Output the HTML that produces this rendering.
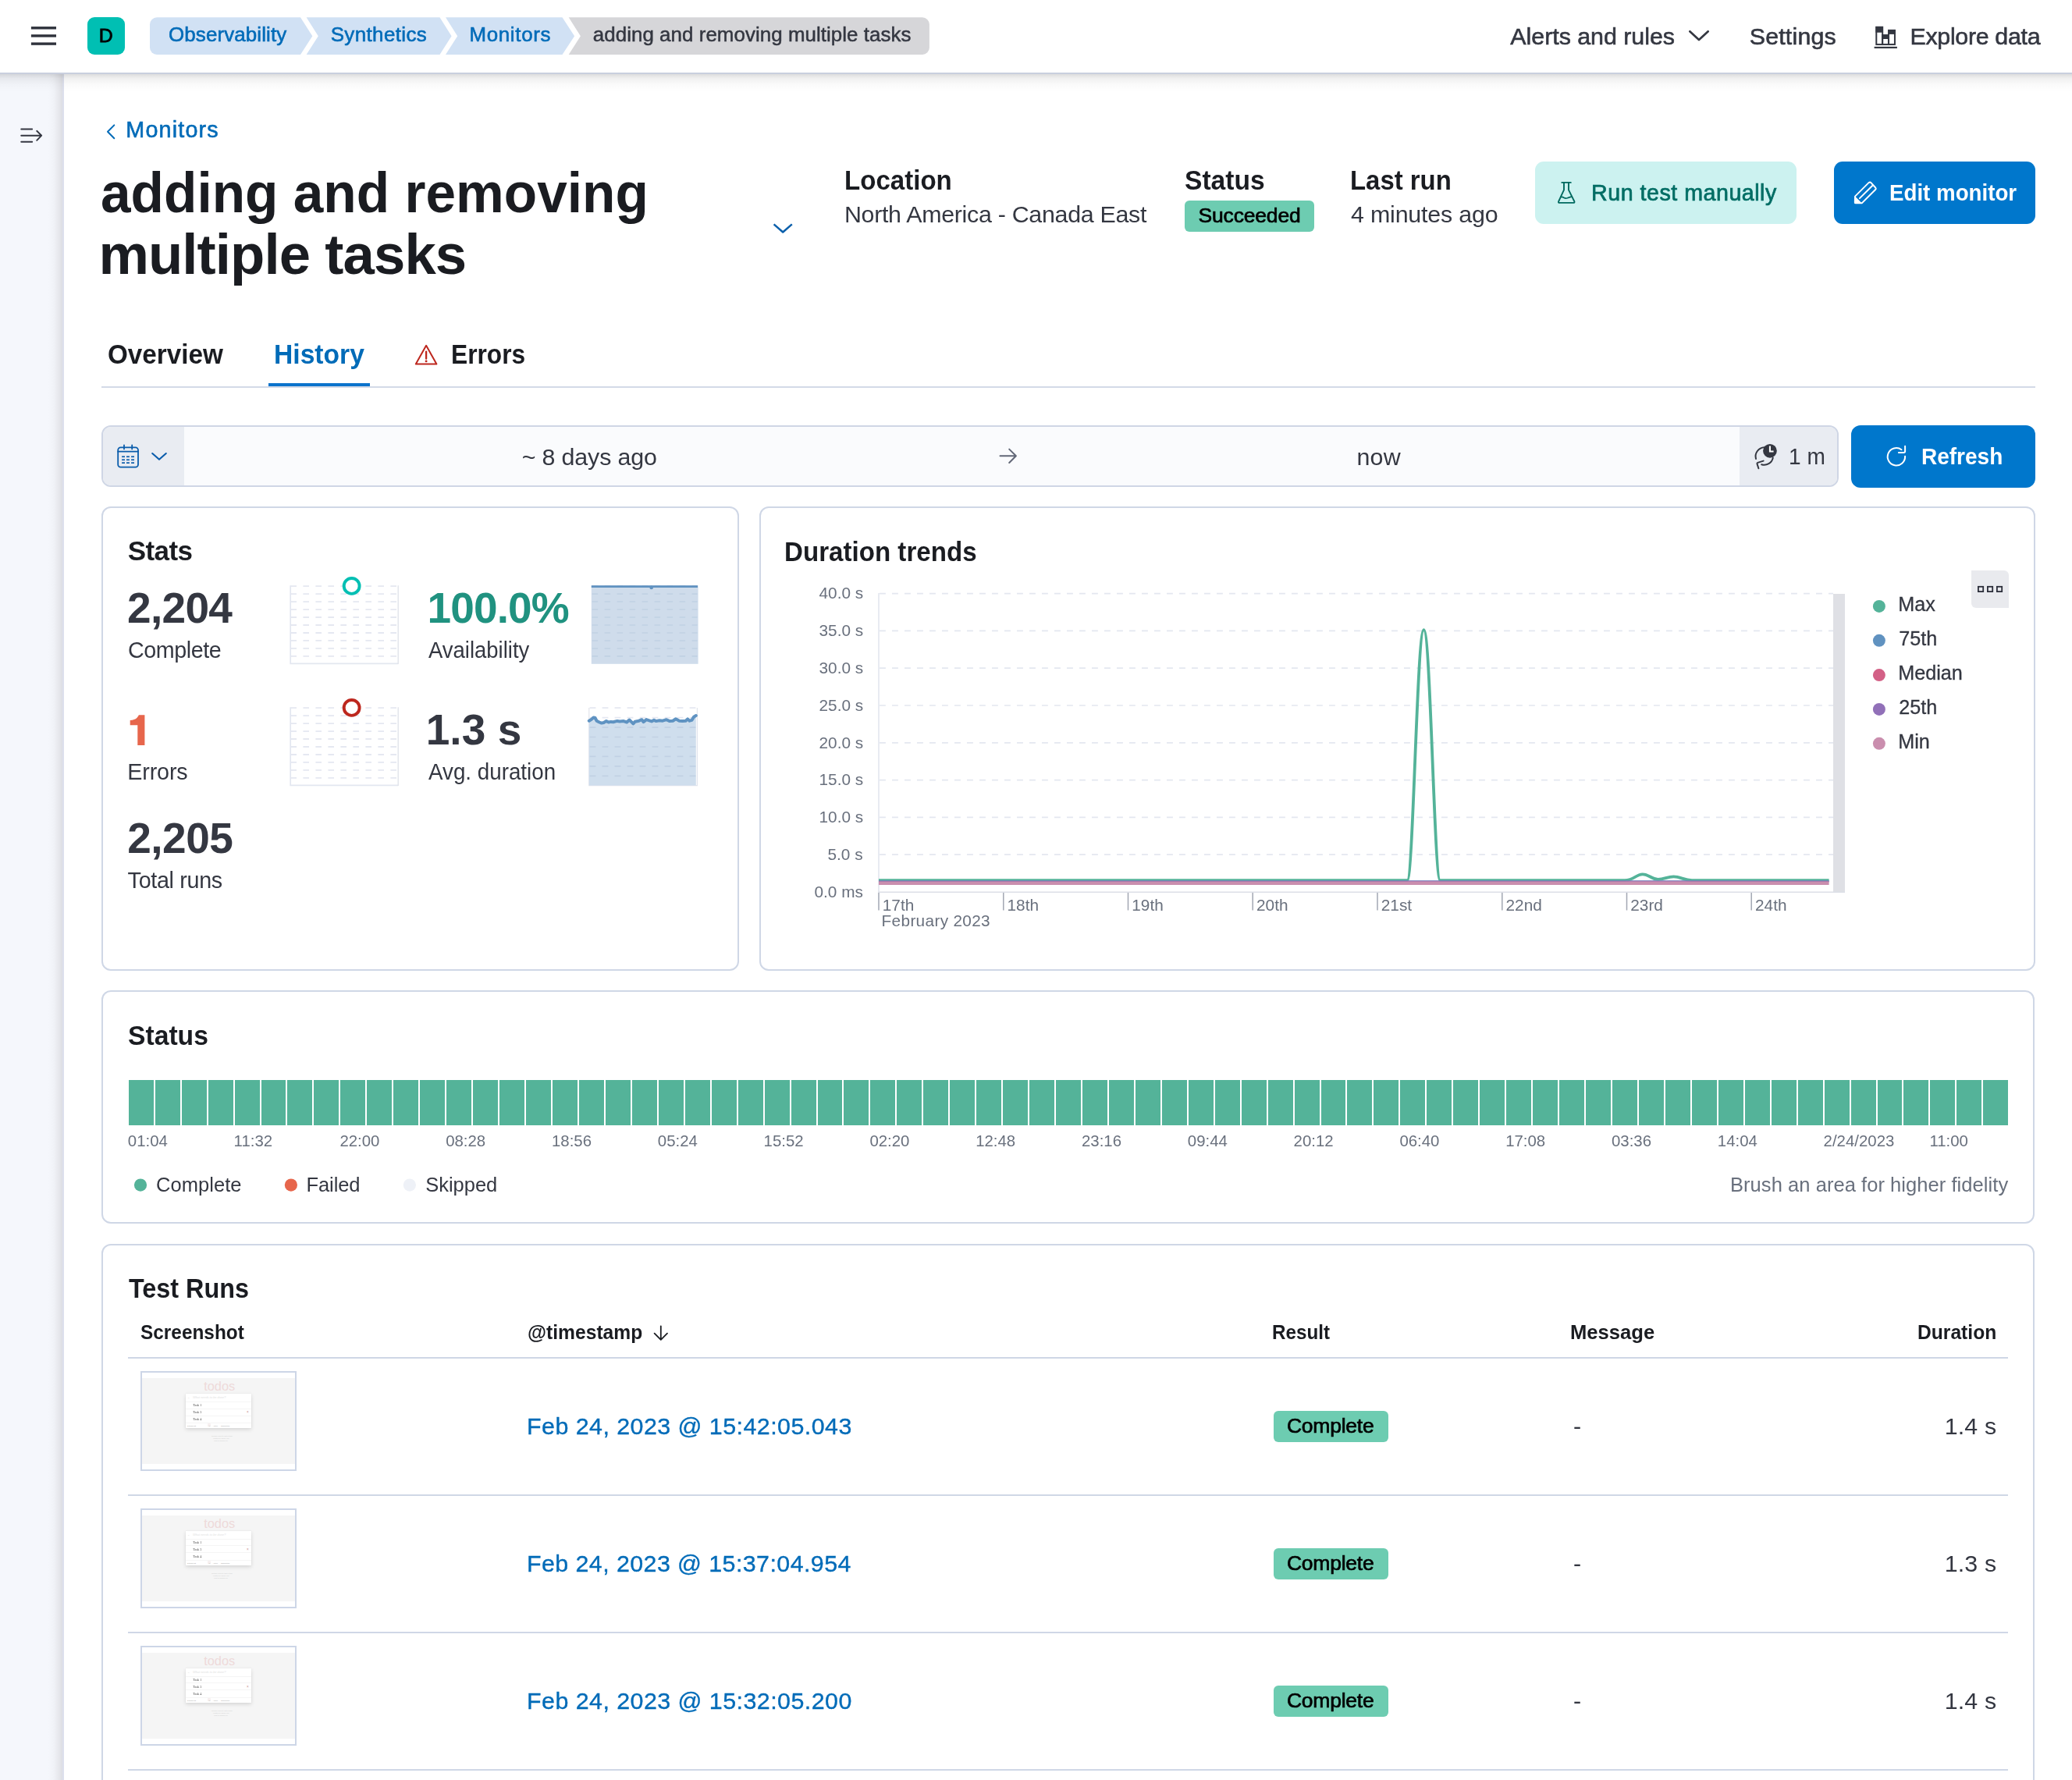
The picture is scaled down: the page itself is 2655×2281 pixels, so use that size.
<!DOCTYPE html>
<html><head><meta charset="utf-8"><title>Synthetics - Monitor history</title>
<style>
html,body{margin:0;padding:0;width:2655px;height:2281px;overflow:hidden;}
body{width:2655px;height:2281px;overflow:hidden;background:#fff;position:relative;font-family:"Liberation Sans",sans-serif;}
.b{position:absolute;box-sizing:border-box;}
.t{position:absolute;white-space:pre;line-height:1;font-family:"Liberation Sans",sans-serif;font-weight:400;}
.ov{position:absolute;left:0;top:0;pointer-events:none;}
.card{position:absolute;box-sizing:border-box;border:2px solid #cfd7e6;border-radius:12px;background:#fff;}
.tl{position:absolute;left:0;top:0;width:2655px;height:2281px;will-change:transform;}
#root{position:relative;width:2655px;height:2281px;overflow:hidden;background:#fff;}

</style></head>
<body>
<div id="root">
<div class="b" style="left:0.00px;top:94.00px;width:80.00px;height:2187.00px;background:linear-gradient(to right,#f5f7fc 0,#f5f7fc 62px,#f0f2f7 69px,#e7e8ed 75px,#dddee3 80px);"></div>
<div class="b" style="left:80.00px;top:94.00px;width:2.00px;height:2187.00px;background:#dde0ed;"></div>
<div class="b" style="left:0.00px;top:95.00px;width:2655.00px;height:22.00px;background:linear-gradient(to bottom,rgba(0,0,0,.135),rgba(0,0,0,.06) 25%,rgba(0,0,0,.02) 60%,rgba(0,0,0,0));"></div>
<div class="b" style="left:0.00px;top:0.00px;width:2655.00px;height:93.00px;background:#fff;"></div>
<div class="b" style="left:0.00px;top:93.00px;width:2655.00px;height:2.00px;background:#c9cfde;"></div>
<div class="b" style="left:112.20px;top:22.30px;width:47.60px;height:47.60px;background:#00bfb3;border-radius:9px;"></div>
<div class="b" style="left:1517.80px;top:256.90px;width:166.40px;height:40.00px;background:#6dccb1;border-radius:6px;"></div>
<div class="b" style="left:1966.90px;top:207.00px;width:335.10px;height:80.00px;background:#ccf2f0;border-radius:11px;"></div>
<div class="b" style="left:2350.00px;top:207.00px;width:258.00px;height:80.00px;background:#0077cc;border-radius:11px;"></div>
<div class="b" style="left:130.00px;top:495.20px;width:2478.00px;height:1.80px;background:#d3dae7;"></div>
<div class="b" style="left:344.10px;top:491.10px;width:130.00px;height:4.20px;background:#0b73cc;"></div>
<div class="b" style="left:130.40px;top:545.40px;width:2225.30px;height:79.00px;background:#fafbfd;border:2px solid #cfd6e5;border-radius:12px;overflow:hidden;"></div>
<div class="b" style="left:132.40px;top:547.40px;width:103.50px;height:75.00px;background:#e9ecf2;border-radius:10px 0 0 10px;"></div>
<div class="b" style="left:2229.10px;top:547.40px;width:124.60px;height:75.00px;background:#e9ecf2;border-radius:0 10px 10px 0;"></div>
<div class="b" style="left:2372.00px;top:545.20px;width:236.00px;height:79.40px;background:#0077cc;border-radius:12px;"></div>
<div class="card" style="left:130.30px;top:649.00px;width:816.70px;height:595.00px;"></div>
<div class="card" style="left:973.00px;top:649.00px;width:1634.50px;height:595.00px;"></div>
<div class="card" style="left:130.30px;top:1269.40px;width:2477.20px;height:298.70px;"></div>
<div class="card" style="left:130.30px;top:1593.80px;width:2477.20px;height:726.20px;"></div>
<div class="b" style="left:2526.00px;top:731.00px;width:48.00px;height:48.00px;background:#e9eaee;border-radius:0 6px 0 6px;"></div>
<div class="b" style="left:2349.20px;top:760.80px;width:14.80px;height:382.20px;background:#dfe0e5;"></div>
<div class="b" style="left:165.00px;top:1384.00px;width:32.00px;height:58.00px;background:#54b399;"></div>
<div class="b" style="left:199.00px;top:1384.00px;width:32.00px;height:58.00px;background:#54b399;"></div>
<div class="b" style="left:233.00px;top:1384.00px;width:32.00px;height:58.00px;background:#54b399;"></div>
<div class="b" style="left:267.00px;top:1384.00px;width:32.00px;height:58.00px;background:#54b399;"></div>
<div class="b" style="left:301.00px;top:1384.00px;width:32.00px;height:58.00px;background:#54b399;"></div>
<div class="b" style="left:335.00px;top:1384.00px;width:31.00px;height:58.00px;background:#54b399;"></div>
<div class="b" style="left:368.00px;top:1384.00px;width:32.00px;height:58.00px;background:#54b399;"></div>
<div class="b" style="left:402.00px;top:1384.00px;width:32.00px;height:58.00px;background:#54b399;"></div>
<div class="b" style="left:436.00px;top:1384.00px;width:32.00px;height:58.00px;background:#54b399;"></div>
<div class="b" style="left:470.00px;top:1384.00px;width:32.00px;height:58.00px;background:#54b399;"></div>
<div class="b" style="left:504.00px;top:1384.00px;width:32.00px;height:58.00px;background:#54b399;"></div>
<div class="b" style="left:538.00px;top:1384.00px;width:32.00px;height:58.00px;background:#54b399;"></div>
<div class="b" style="left:572.00px;top:1384.00px;width:32.00px;height:58.00px;background:#54b399;"></div>
<div class="b" style="left:606.00px;top:1384.00px;width:32.00px;height:58.00px;background:#54b399;"></div>
<div class="b" style="left:640.00px;top:1384.00px;width:32.00px;height:58.00px;background:#54b399;"></div>
<div class="b" style="left:674.00px;top:1384.00px;width:32.00px;height:58.00px;background:#54b399;"></div>
<div class="b" style="left:708.00px;top:1384.00px;width:32.00px;height:58.00px;background:#54b399;"></div>
<div class="b" style="left:742.00px;top:1384.00px;width:32.00px;height:58.00px;background:#54b399;"></div>
<div class="b" style="left:776.00px;top:1384.00px;width:32.00px;height:58.00px;background:#54b399;"></div>
<div class="b" style="left:810.00px;top:1384.00px;width:32.00px;height:58.00px;background:#54b399;"></div>
<div class="b" style="left:844.00px;top:1384.00px;width:32.00px;height:58.00px;background:#54b399;"></div>
<div class="b" style="left:878.00px;top:1384.00px;width:32.00px;height:58.00px;background:#54b399;"></div>
<div class="b" style="left:912.00px;top:1384.00px;width:32.00px;height:58.00px;background:#54b399;"></div>
<div class="b" style="left:946.00px;top:1384.00px;width:32.00px;height:58.00px;background:#54b399;"></div>
<div class="b" style="left:980.00px;top:1384.00px;width:32.00px;height:58.00px;background:#54b399;"></div>
<div class="b" style="left:1014.00px;top:1384.00px;width:32.00px;height:58.00px;background:#54b399;"></div>
<div class="b" style="left:1048.00px;top:1384.00px;width:31.00px;height:58.00px;background:#54b399;"></div>
<div class="b" style="left:1081.00px;top:1384.00px;width:32.00px;height:58.00px;background:#54b399;"></div>
<div class="b" style="left:1115.00px;top:1384.00px;width:32.00px;height:58.00px;background:#54b399;"></div>
<div class="b" style="left:1149.00px;top:1384.00px;width:32.00px;height:58.00px;background:#54b399;"></div>
<div class="b" style="left:1183.00px;top:1384.00px;width:32.00px;height:58.00px;background:#54b399;"></div>
<div class="b" style="left:1217.00px;top:1384.00px;width:32.00px;height:58.00px;background:#54b399;"></div>
<div class="b" style="left:1251.00px;top:1384.00px;width:32.00px;height:58.00px;background:#54b399;"></div>
<div class="b" style="left:1285.00px;top:1384.00px;width:32.00px;height:58.00px;background:#54b399;"></div>
<div class="b" style="left:1319.00px;top:1384.00px;width:32.00px;height:58.00px;background:#54b399;"></div>
<div class="b" style="left:1353.00px;top:1384.00px;width:32.00px;height:58.00px;background:#54b399;"></div>
<div class="b" style="left:1387.00px;top:1384.00px;width:32.00px;height:58.00px;background:#54b399;"></div>
<div class="b" style="left:1421.00px;top:1384.00px;width:32.00px;height:58.00px;background:#54b399;"></div>
<div class="b" style="left:1455.00px;top:1384.00px;width:32.00px;height:58.00px;background:#54b399;"></div>
<div class="b" style="left:1489.00px;top:1384.00px;width:32.00px;height:58.00px;background:#54b399;"></div>
<div class="b" style="left:1523.00px;top:1384.00px;width:32.00px;height:58.00px;background:#54b399;"></div>
<div class="b" style="left:1557.00px;top:1384.00px;width:32.00px;height:58.00px;background:#54b399;"></div>
<div class="b" style="left:1591.00px;top:1384.00px;width:32.00px;height:58.00px;background:#54b399;"></div>
<div class="b" style="left:1625.00px;top:1384.00px;width:32.00px;height:58.00px;background:#54b399;"></div>
<div class="b" style="left:1659.00px;top:1384.00px;width:32.00px;height:58.00px;background:#54b399;"></div>
<div class="b" style="left:1693.00px;top:1384.00px;width:31.00px;height:58.00px;background:#54b399;"></div>
<div class="b" style="left:1726.00px;top:1384.00px;width:32.00px;height:58.00px;background:#54b399;"></div>
<div class="b" style="left:1760.00px;top:1384.00px;width:32.00px;height:58.00px;background:#54b399;"></div>
<div class="b" style="left:1794.00px;top:1384.00px;width:32.00px;height:58.00px;background:#54b399;"></div>
<div class="b" style="left:1828.00px;top:1384.00px;width:32.00px;height:58.00px;background:#54b399;"></div>
<div class="b" style="left:1862.00px;top:1384.00px;width:32.00px;height:58.00px;background:#54b399;"></div>
<div class="b" style="left:1896.00px;top:1384.00px;width:32.00px;height:58.00px;background:#54b399;"></div>
<div class="b" style="left:1930.00px;top:1384.00px;width:32.00px;height:58.00px;background:#54b399;"></div>
<div class="b" style="left:1964.00px;top:1384.00px;width:32.00px;height:58.00px;background:#54b399;"></div>
<div class="b" style="left:1998.00px;top:1384.00px;width:32.00px;height:58.00px;background:#54b399;"></div>
<div class="b" style="left:2032.00px;top:1384.00px;width:32.00px;height:58.00px;background:#54b399;"></div>
<div class="b" style="left:2066.00px;top:1384.00px;width:32.00px;height:58.00px;background:#54b399;"></div>
<div class="b" style="left:2100.00px;top:1384.00px;width:32.00px;height:58.00px;background:#54b399;"></div>
<div class="b" style="left:2134.00px;top:1384.00px;width:32.00px;height:58.00px;background:#54b399;"></div>
<div class="b" style="left:2168.00px;top:1384.00px;width:32.00px;height:58.00px;background:#54b399;"></div>
<div class="b" style="left:2202.00px;top:1384.00px;width:32.00px;height:58.00px;background:#54b399;"></div>
<div class="b" style="left:2236.00px;top:1384.00px;width:32.00px;height:58.00px;background:#54b399;"></div>
<div class="b" style="left:2270.00px;top:1384.00px;width:32.00px;height:58.00px;background:#54b399;"></div>
<div class="b" style="left:2304.00px;top:1384.00px;width:32.00px;height:58.00px;background:#54b399;"></div>
<div class="b" style="left:2338.00px;top:1384.00px;width:32.00px;height:58.00px;background:#54b399;"></div>
<div class="b" style="left:2372.00px;top:1384.00px;width:32.00px;height:58.00px;background:#54b399;"></div>
<div class="b" style="left:2406.00px;top:1384.00px;width:31.00px;height:58.00px;background:#54b399;"></div>
<div class="b" style="left:2439.00px;top:1384.00px;width:32.00px;height:58.00px;background:#54b399;"></div>
<div class="b" style="left:2473.00px;top:1384.00px;width:32.00px;height:58.00px;background:#54b399;"></div>
<div class="b" style="left:2507.00px;top:1384.00px;width:32.00px;height:58.00px;background:#54b399;"></div>
<div class="b" style="left:2541.00px;top:1384.00px;width:32.00px;height:58.00px;background:#54b399;"></div>
<div class="b" style="left:164.00px;top:1738.80px;width:2409.40px;height:2.00px;background:#cfd7e6;"></div>
<div class="b" style="left:164.00px;top:1914.90px;width:2409.40px;height:2.00px;background:#cfd7e6;"></div>
<div class="b" style="left:164.00px;top:2090.85px;width:2409.40px;height:2.00px;background:#cfd7e6;"></div>
<div class="b" style="left:164.00px;top:2266.80px;width:2409.40px;height:2.00px;background:#cfd7e6;"></div>
<div class="b" style="left:180.30px;top:1757.30px;width:199.40px;height:127.50px;background:#fff;border:2px solid #cdd6e7;"></div>
<div class="b" style="left:182.30px;top:1765.90px;width:195.40px;height:110.10px;background:#f5f5f5;"></div>
<div class="b" style="left:237.80px;top:1786.00px;width:84.20px;height:44.00px;background:#fff;box-shadow:0 2px 5px rgba(0,0,0,.13),0 0 1px rgba(0,0,0,.07);"></div>
<div class="b" style="left:237.80px;top:1795.60px;width:84.20px;height:1.00px;background:#f5f5f5;"></div>
<div class="b" style="left:237.80px;top:1804.50px;width:84.20px;height:1.00px;background:#f5f5f5;"></div>
<div class="b" style="left:237.80px;top:1813.50px;width:84.20px;height:1.00px;background:#f5f5f5;"></div>
<div class="b" style="left:237.80px;top:1822.70px;width:84.20px;height:1.00px;background:#f5f5f5;"></div>
<span class="t" style="left:247.00px;top:1789.30px;font-size:3.9px;color:#e2e2e2;font-style:italic;">What needs to be done?</span>
<span class="t" style="left:240.40px;top:1789.20px;font-size:4px;color:#e2e2e2;">&#8964;</span>
<span class="t" style="left:247.20px;top:1799.10px;font-size:4.3px;color:#4d4d4d;font-family:'Liberation Serif',serif;filter:blur(.25px);">Task 1</span>
<span class="t" style="left:247.20px;top:1808.10px;font-size:4.3px;color:#4d4d4d;font-family:'Liberation Serif',serif;filter:blur(.25px);">Task 3</span>
<span class="t" style="left:247.20px;top:1817.20px;font-size:4.3px;color:#4d4d4d;font-family:'Liberation Serif',serif;filter:blur(.25px);">Task 4</span>
<span class="t" style="left:315.90px;top:1807.70px;font-size:4.6px;color:#c98f8f;">&#215;</span>
<span class="t" style="left:239.90px;top:1825.80px;font-size:2.3px;color:#9a9a9a;">3 items left</span>
<div class="b" style="left:265.50px;top:1824.40px;width:4.80px;height:3.50px;background:#f7f0f0;border-radius:1px;"></div>
<span class="t" style="left:266.70px;top:1825.80px;font-size:2.3px;color:#9a9a9a;">All</span>
<span class="t" style="left:272.80px;top:1825.80px;font-size:2.3px;color:#9a9a9a;">Active</span>
<span class="t" style="left:282.90px;top:1825.80px;font-size:2.3px;color:#9a9a9a;">Completed</span>
<span class="t" style="left:271.30px;top:1838.80px;font-size:2.3px;color:#cfcfcf;">Double-click to edit a todo</span>
<span class="t" style="left:273.00px;top:1841.80px;font-size:2.3px;color:#cfcfcf;">Written by Evan You</span>
<span class="t" style="left:274.20px;top:1844.70px;font-size:2.3px;color:#cfcfcf;">Part of TodoMVC</span>
<span class="t" style="left:261.2px;top:1768.2px;font-size:16.4px;color:#eedada;">todos</span>
<div class="b" style="left:1631.70px;top:1807.80px;width:147.40px;height:40.10px;background:#6dccb1;border-radius:6px;"></div>
<div class="b" style="left:180.30px;top:1933.25px;width:199.40px;height:127.50px;background:#fff;border:2px solid #cdd6e7;"></div>
<div class="b" style="left:182.30px;top:1941.85px;width:195.40px;height:110.10px;background:#f5f5f5;"></div>
<div class="b" style="left:237.80px;top:1961.95px;width:84.20px;height:44.00px;background:#fff;box-shadow:0 2px 5px rgba(0,0,0,.13),0 0 1px rgba(0,0,0,.07);"></div>
<div class="b" style="left:237.80px;top:1971.55px;width:84.20px;height:1.00px;background:#f5f5f5;"></div>
<div class="b" style="left:237.80px;top:1980.45px;width:84.20px;height:1.00px;background:#f5f5f5;"></div>
<div class="b" style="left:237.80px;top:1989.45px;width:84.20px;height:1.00px;background:#f5f5f5;"></div>
<div class="b" style="left:237.80px;top:1998.65px;width:84.20px;height:1.00px;background:#f5f5f5;"></div>
<span class="t" style="left:247.00px;top:1965.25px;font-size:3.9px;color:#e2e2e2;font-style:italic;">What needs to be done?</span>
<span class="t" style="left:240.40px;top:1965.15px;font-size:4px;color:#e2e2e2;">&#8964;</span>
<span class="t" style="left:247.20px;top:1975.05px;font-size:4.3px;color:#4d4d4d;font-family:'Liberation Serif',serif;filter:blur(.25px);">Task 1</span>
<span class="t" style="left:247.20px;top:1984.05px;font-size:4.3px;color:#4d4d4d;font-family:'Liberation Serif',serif;filter:blur(.25px);">Task 3</span>
<span class="t" style="left:247.20px;top:1993.15px;font-size:4.3px;color:#4d4d4d;font-family:'Liberation Serif',serif;filter:blur(.25px);">Task 4</span>
<span class="t" style="left:315.90px;top:1983.65px;font-size:4.6px;color:#c98f8f;">&#215;</span>
<span class="t" style="left:239.90px;top:2001.75px;font-size:2.3px;color:#9a9a9a;">3 items left</span>
<div class="b" style="left:265.50px;top:2000.35px;width:4.80px;height:3.50px;background:#f7f0f0;border-radius:1px;"></div>
<span class="t" style="left:266.70px;top:2001.75px;font-size:2.3px;color:#9a9a9a;">All</span>
<span class="t" style="left:272.80px;top:2001.75px;font-size:2.3px;color:#9a9a9a;">Active</span>
<span class="t" style="left:282.90px;top:2001.75px;font-size:2.3px;color:#9a9a9a;">Completed</span>
<span class="t" style="left:271.30px;top:2014.75px;font-size:2.3px;color:#cfcfcf;">Double-click to edit a todo</span>
<span class="t" style="left:273.00px;top:2017.75px;font-size:2.3px;color:#cfcfcf;">Written by Evan You</span>
<span class="t" style="left:274.20px;top:2020.65px;font-size:2.3px;color:#cfcfcf;">Part of TodoMVC</span>
<span class="t" style="left:261.2px;top:1944.2px;font-size:16.4px;color:#eedada;">todos</span>
<div class="b" style="left:1631.70px;top:1983.75px;width:147.40px;height:40.10px;background:#6dccb1;border-radius:6px;"></div>
<div class="b" style="left:180.30px;top:2109.20px;width:199.40px;height:127.50px;background:#fff;border:2px solid #cdd6e7;"></div>
<div class="b" style="left:182.30px;top:2117.80px;width:195.40px;height:110.10px;background:#f5f5f5;"></div>
<div class="b" style="left:237.80px;top:2137.90px;width:84.20px;height:44.00px;background:#fff;box-shadow:0 2px 5px rgba(0,0,0,.13),0 0 1px rgba(0,0,0,.07);"></div>
<div class="b" style="left:237.80px;top:2147.50px;width:84.20px;height:1.00px;background:#f5f5f5;"></div>
<div class="b" style="left:237.80px;top:2156.40px;width:84.20px;height:1.00px;background:#f5f5f5;"></div>
<div class="b" style="left:237.80px;top:2165.40px;width:84.20px;height:1.00px;background:#f5f5f5;"></div>
<div class="b" style="left:237.80px;top:2174.60px;width:84.20px;height:1.00px;background:#f5f5f5;"></div>
<span class="t" style="left:247.00px;top:2141.20px;font-size:3.9px;color:#e2e2e2;font-style:italic;">What needs to be done?</span>
<span class="t" style="left:240.40px;top:2141.10px;font-size:4px;color:#e2e2e2;">&#8964;</span>
<span class="t" style="left:247.20px;top:2151.00px;font-size:4.3px;color:#4d4d4d;font-family:'Liberation Serif',serif;filter:blur(.25px);">Task 1</span>
<span class="t" style="left:247.20px;top:2160.00px;font-size:4.3px;color:#4d4d4d;font-family:'Liberation Serif',serif;filter:blur(.25px);">Task 3</span>
<span class="t" style="left:247.20px;top:2169.10px;font-size:4.3px;color:#4d4d4d;font-family:'Liberation Serif',serif;filter:blur(.25px);">Task 4</span>
<span class="t" style="left:315.90px;top:2159.60px;font-size:4.6px;color:#c98f8f;">&#215;</span>
<span class="t" style="left:239.90px;top:2177.70px;font-size:2.3px;color:#9a9a9a;">3 items left</span>
<div class="b" style="left:265.50px;top:2176.30px;width:4.80px;height:3.50px;background:#f7f0f0;border-radius:1px;"></div>
<span class="t" style="left:266.70px;top:2177.70px;font-size:2.3px;color:#9a9a9a;">All</span>
<span class="t" style="left:272.80px;top:2177.70px;font-size:2.3px;color:#9a9a9a;">Active</span>
<span class="t" style="left:282.90px;top:2177.70px;font-size:2.3px;color:#9a9a9a;">Completed</span>
<span class="t" style="left:271.30px;top:2190.70px;font-size:2.3px;color:#cfcfcf;">Double-click to edit a todo</span>
<span class="t" style="left:273.00px;top:2193.70px;font-size:2.3px;color:#cfcfcf;">Written by Evan You</span>
<span class="t" style="left:274.20px;top:2196.60px;font-size:2.3px;color:#cfcfcf;">Part of TodoMVC</span>
<span class="t" style="left:261.2px;top:2120.1px;font-size:16.4px;color:#eedada;">todos</span>
<div class="b" style="left:1631.70px;top:2159.70px;width:147.40px;height:40.10px;background:#6dccb1;border-radius:6px;"></div>
<svg class="ov" width="2655" height="2281" viewBox="0 0 2655 2281">
<rect x="39.9" y="34.10" width="32.1" height="3.4" fill="#2f323c"/>
<rect x="39.9" y="44.20" width="32.1" height="3.4" fill="#2f323c"/>
<rect x="39.9" y="54.40" width="32.1" height="3.4" fill="#2f323c"/>
<path d="M201,22.3 H385 L400.3,46.15 L385,70.0 H201 A9,9 0 0 1 192,61.0 V31.3 A9,9 0 0 1 201,22.3 Z" fill="#d1e1f4"/>
<path d="M392.6,22.3 H563.5 L578.6,46.15 L563.5,70.0 H392.6 L407.8,46.15 Z" fill="#d1e1f4"/>
<path d="M571,22.3 H720.5 L736.1,46.15 L720.5,70.0 H571 L586.2,46.15 Z" fill="#d1e1f4"/>
<path d="M728.7,22.3 H1181.9 A9,9 0 0 1 1190.9,31.3 V61.0 A9,9 0 0 1 1181.9,70.0 H728.7 L743.9,46.15 Z" fill="#d6d6d9"/>
<path d="M2165.3,40.3 L2177,51 L2188.7,40.3" fill="none" stroke="#343741" stroke-width="2.7" stroke-linecap="round" stroke-linejoin="round"/>
<g fill="#343741"><rect x="2401.6" y="59.8" width="29.3" height="2.2"/><rect x="2403.4" y="34" width="9.4" height="7.7"/><rect x="2411.3" y="44.3" width="9.4" height="5.7"/><rect x="2419.3" y="38.1" width="9.4" height="5.8"/></g><g fill="none" stroke="#343741" stroke-width="2"><rect x="2404.3" y="34.75" width="7.9" height="22.2"/><rect x="2412.05" y="45.05" width="7.9" height="11.9"/><rect x="2420.05" y="38.85" width="7.9" height="18.1"/></g>
<g fill="none" stroke="#343741" stroke-width="1.9" stroke-linecap="round" stroke-linejoin="round"><path d="M27.2,165.5 H41.2 M27.2,173.7 H52.8 M27.2,181.8 H41.2 M47.2,167.8 L53.2,173.7 L47.2,179.8"/></g>
<path d="M146.3,160.4 L138,168.8 L146.3,177.2" fill="none" stroke="#006bb8" stroke-width="2" stroke-linecap="round" stroke-linejoin="round"/>
<path d="M991.6,287.4 L1003.2,297.5 L1014.8,287.4" fill="none" stroke="#0a5fab" stroke-width="2.5" stroke-linecap="butt" stroke-linejoin="round"/>
<g fill="none" stroke="#00695f" stroke-width="1.9" stroke-linecap="round" stroke-linejoin="round"><path d="M2001.3,233.9 H2012.8 M2004,234 V243.4 L1997.2,258 Q1996.4,259.9 1998.4,259.9 H2016 Q2018,259.9 2017.3,258 L2010,243.4 V234"/><path d="M2000.4,252.4 Q2002.6,252.2 2004.2,253.6 Q2006,254.6 2008.4,253.8 Q2011,252.6 2013.4,252.1" stroke-width="1.7"/></g>
<g fill="none" stroke="#fff" stroke-width="1.9" stroke-linejoin="round" stroke-linecap="round"><path d="M2377,251.7 L2394.5,234.2 Q2396.1,232.7 2397.7,234.3 L2403.2,240.5 Q2404.3,241.8 2403.1,243 L2385.7,260.3 H2377.6 Q2376.8,260.3 2376.8,259.5 Z"/><path d="M2382.9,254.2 L2399.2,238"/></g><path d="M2376.8,252.2 L2384.9,260.3 H2377.3 Q2376.8,260.3 2376.8,259.8 Z" fill="#fff" stroke="#fff" stroke-width="1.2" stroke-linejoin="round"/>
<g fill="none" stroke="#bd271e" stroke-linejoin="round" stroke-linecap="round"><path d="M546.1,442.8 L559.4,466.6 H532.8 Z" stroke-width="2"/><path d="M546.1,450.6 V459.7" stroke-width="2.3"/></g><circle cx="546.1" cy="462.9" r="1.45" fill="#bd271e"/>
<g fill="none" stroke="#0a5cab" stroke-width="1.8" stroke-linecap="round"><rect x="151.2" y="573.4" width="25.8" height="25.3" rx="3.4"/><path d="M151.2,578.7 H177 M159,570.4 V575.4 M169.2,570.4 V575.4"/></g><g fill="#0a5cab"><rect x="156.1" y="584.4" width="3.9" height="1.7"/><rect x="162" y="584.4" width="3.9" height="1.7"/><rect x="168.1" y="584.4" width="3.9" height="1.7"/><rect x="156.1" y="588.4" width="3.9" height="1.7"/><rect x="162" y="588.4" width="3.9" height="1.7"/><rect x="168.1" y="588.4" width="3.9" height="1.7"/><rect x="156.1" y="592.3" width="3.9" height="1.7"/><rect x="162" y="592.3" width="3.9" height="1.7"/><rect x="168.1" y="592.3" width="3.9" height="1.7"/></g>
<path d="M195.2,581 L204,588.8 L212.8,581" fill="none" stroke="#0a5cab" stroke-width="2.1" stroke-linecap="round" stroke-linejoin="round"/>
<g fill="none" stroke="#626877" stroke-width="2" stroke-linecap="round" stroke-linejoin="round"><path d="M1281.5,584.3 H1301.5 M1293.2,575.6 L1301.9,584.3 L1293.2,593"/></g>
<circle cx="2267.95" cy="577.85" r="8.85" fill="#343741"/><path d="M2267.95,571.6 V578.5 H2272.6" fill="none" stroke="#fff" stroke-width="2.1"/><g fill="none" stroke="#343741" stroke-width="2" stroke-linecap="round" stroke-linejoin="round"><path d="M2260.8,573.3 A11.6,11.6 0 0 0 2250,588"/><path d="M2271.8,586.6 A11.3,11.3 0 0 1 2257.2,595.2"/><path d="M2259.6,590.6 L2252.3,592.9 Q2251.2,593.3 2251.5,594.4 L2253.4,600.2"/></g>
<g fill="none" stroke="#fff" stroke-width="2" stroke-linecap="round" stroke-linejoin="round"><path d="M2436.5,576.2 A11.2,11.2 0 1 0 2441.1,584.8"/><path d="M2441.1,571.8 V578.2 Q2441.1,579.9 2439.4,579.9 H2432.9"/></g>
<rect x="2534.9" y="751.8" width="6.3" height="6.3" fill="none" stroke="#2b2e3a" stroke-width="1.8"/>
<rect x="2546.9" y="751.8" width="6.3" height="6.3" fill="none" stroke="#2b2e3a" stroke-width="1.8"/>
<rect x="2558.9" y="751.8" width="6.3" height="6.3" fill="none" stroke="#2b2e3a" stroke-width="1.8"/>
<path d="M372.40000000000003,751.10 H509.8" stroke="#e5e8f1" stroke-width="1.8" stroke-dasharray="7.6 8.4" fill="none"/>
<path d="M372.40000000000003,761.08 H509.8" stroke="#e5e8f1" stroke-width="1.8" stroke-dasharray="7.6 8.4" fill="none"/>
<path d="M372.40000000000003,771.06 H509.8" stroke="#e5e8f1" stroke-width="1.8" stroke-dasharray="7.6 8.4" fill="none"/>
<path d="M372.40000000000003,781.04 H509.8" stroke="#e5e8f1" stroke-width="1.8" stroke-dasharray="7.6 8.4" fill="none"/>
<path d="M372.40000000000003,791.02 H509.8" stroke="#e5e8f1" stroke-width="1.8" stroke-dasharray="7.6 8.4" fill="none"/>
<path d="M372.40000000000003,801.00 H509.8" stroke="#e5e8f1" stroke-width="1.8" stroke-dasharray="7.6 8.4" fill="none"/>
<path d="M372.40000000000003,810.98 H509.8" stroke="#e5e8f1" stroke-width="1.8" stroke-dasharray="7.6 8.4" fill="none"/>
<path d="M372.40000000000003,820.96 H509.8" stroke="#e5e8f1" stroke-width="1.8" stroke-dasharray="7.6 8.4" fill="none"/>
<path d="M372.40000000000003,830.94 H509.8" stroke="#e5e8f1" stroke-width="1.8" stroke-dasharray="7.6 8.4" fill="none"/>
<path d="M372.40000000000003,840.92 H509.8" stroke="#e5e8f1" stroke-width="1.8" stroke-dasharray="7.6 8.4" fill="none"/>
<path d="M372.20000000000005,750.3 V850.4 H510.2" stroke="#e3e7f0" stroke-width="1.7" fill="none"/><path d="M510.2,851 V750.3" stroke="#dfe2e9" stroke-width="1.3" fill="none"/>
<circle cx="450.65" cy="750.9" r="9.95" fill="#fff" stroke="#02bfb3" stroke-width="3.9"/>
<path d="M372.40000000000003,907.10 H509.8" stroke="#e5e8f1" stroke-width="1.8" stroke-dasharray="7.6 8.4" fill="none"/>
<path d="M372.40000000000003,917.08 H509.8" stroke="#e5e8f1" stroke-width="1.8" stroke-dasharray="7.6 8.4" fill="none"/>
<path d="M372.40000000000003,927.06 H509.8" stroke="#e5e8f1" stroke-width="1.8" stroke-dasharray="7.6 8.4" fill="none"/>
<path d="M372.40000000000003,937.04 H509.8" stroke="#e5e8f1" stroke-width="1.8" stroke-dasharray="7.6 8.4" fill="none"/>
<path d="M372.40000000000003,947.02 H509.8" stroke="#e5e8f1" stroke-width="1.8" stroke-dasharray="7.6 8.4" fill="none"/>
<path d="M372.40000000000003,957.00 H509.8" stroke="#e5e8f1" stroke-width="1.8" stroke-dasharray="7.6 8.4" fill="none"/>
<path d="M372.40000000000003,966.98 H509.8" stroke="#e5e8f1" stroke-width="1.8" stroke-dasharray="7.6 8.4" fill="none"/>
<path d="M372.40000000000003,976.96 H509.8" stroke="#e5e8f1" stroke-width="1.8" stroke-dasharray="7.6 8.4" fill="none"/>
<path d="M372.40000000000003,986.94 H509.8" stroke="#e5e8f1" stroke-width="1.8" stroke-dasharray="7.6 8.4" fill="none"/>
<path d="M372.40000000000003,996.92 H509.8" stroke="#e5e8f1" stroke-width="1.8" stroke-dasharray="7.6 8.4" fill="none"/>
<path d="M372.20000000000005,906.3 V1006.4 H510.2" stroke="#e3e7f0" stroke-width="1.7" fill="none"/><path d="M510.2,1007 V906.3" stroke="#dfe2e9" stroke-width="1.3" fill="none"/>
<circle cx="450.65" cy="906.9" r="9.95" fill="#fff" stroke="#bd271e" stroke-width="3.9"/>
<rect x="757.8" y="750.3" width="136.8" height="100.5" fill="#cfdceb"/>
<path d="M758.5999999999999,751.10 H893.6" stroke="#c1d1e4" stroke-width="1.6" stroke-dasharray="7.6 8.4" fill="none"/>
<path d="M758.5999999999999,761.08 H893.6" stroke="#c1d1e4" stroke-width="1.6" stroke-dasharray="7.6 8.4" fill="none"/>
<path d="M758.5999999999999,771.06 H893.6" stroke="#c1d1e4" stroke-width="1.6" stroke-dasharray="7.6 8.4" fill="none"/>
<path d="M758.5999999999999,781.04 H893.6" stroke="#c1d1e4" stroke-width="1.6" stroke-dasharray="7.6 8.4" fill="none"/>
<path d="M758.5999999999999,791.02 H893.6" stroke="#c1d1e4" stroke-width="1.6" stroke-dasharray="7.6 8.4" fill="none"/>
<path d="M758.5999999999999,801.00 H893.6" stroke="#c1d1e4" stroke-width="1.6" stroke-dasharray="7.6 8.4" fill="none"/>
<path d="M758.5999999999999,810.98 H893.6" stroke="#c1d1e4" stroke-width="1.6" stroke-dasharray="7.6 8.4" fill="none"/>
<path d="M758.5999999999999,820.96 H893.6" stroke="#c1d1e4" stroke-width="1.6" stroke-dasharray="7.6 8.4" fill="none"/>
<path d="M758.5999999999999,830.94 H893.6" stroke="#c1d1e4" stroke-width="1.6" stroke-dasharray="7.6 8.4" fill="none"/>
<path d="M758.5999999999999,840.92 H893.6" stroke="#c1d1e4" stroke-width="1.6" stroke-dasharray="7.6 8.4" fill="none"/>
<path d="M757.8,751.6 H894" stroke="#6092c0" stroke-width="2.8" fill="none"/><circle cx="834.7" cy="752.9" r="2.3" fill="#6092c0"/>
<path d="M755.6,907.10 H892.6" stroke="#e5e8f1" stroke-width="1.8" stroke-dasharray="7.8 8.2" fill="none"/>
<path d="M755.6,919.57 H892.6" stroke="#e5e8f1" stroke-width="1.8" stroke-dasharray="7.8 8.2" fill="none"/>
<path d="M754.8,907 V1006.6 H893.4 V907" stroke="#e1e4ec" stroke-width="1.2" fill="none"/>
<path d="M754.8,923.7 L757.6,922.1 L760.5,919.4 L762.6,920.0 L764.6,923.7 L767.9,925.5 L770.8,926.6 L773.6,926.0 L776.9,924.1 L779.8,925.5 L782.7,924.9 L785.9,925.2 L790.9,923.9 L794.1,924.4 L799.1,924.1 L803.2,925.5 L806.4,922.5 L808.9,924.9 L811.4,927.4 L813.8,924.7 L818.8,923.7 L822.4,922.2 L824.5,925.2 L828.2,922.1 L831.9,923.3 L835.2,924.4 L838.0,922.7 L840.5,924.1 L845.0,923.3 L849.1,923.7 L854.0,922.2 L858.1,924.1 L862.2,923.7 L865.9,921.3 L870.4,923.7 L874.5,923.9 L878.6,923.7 L881.1,921.4 L883.6,923.7 L886.4,922.9 L889.3,918.4 L891.8,917.0 L891.8,1006.6 L754.8,1006.6 Z" fill="#cfdeed"/>
<path d="M755.6,932.04 H892" stroke="#c1d1e4" stroke-width="1.7" stroke-dasharray="7.8 8.2" fill="none"/>
<path d="M755.6,944.51 H892" stroke="#c1d1e4" stroke-width="1.7" stroke-dasharray="7.8 8.2" fill="none"/>
<path d="M755.6,956.98 H892" stroke="#c1d1e4" stroke-width="1.7" stroke-dasharray="7.8 8.2" fill="none"/>
<path d="M755.6,969.45 H892" stroke="#c1d1e4" stroke-width="1.7" stroke-dasharray="7.8 8.2" fill="none"/>
<path d="M755.6,981.92 H892" stroke="#c1d1e4" stroke-width="1.7" stroke-dasharray="7.8 8.2" fill="none"/>
<path d="M755.6,994.39 H892" stroke="#c1d1e4" stroke-width="1.7" stroke-dasharray="7.8 8.2" fill="none"/>
<path d="M754.8,923.7 L757.6,922.1 L760.5,919.4 L762.6,920.0 L764.6,923.7 L767.9,925.5 L770.8,926.6 L773.6,926.0 L776.9,924.1 L779.8,925.5 L782.7,924.9 L785.9,925.2 L790.9,923.9 L794.1,924.4 L799.1,924.1 L803.2,925.5 L806.4,922.5 L808.9,924.9 L811.4,927.4 L813.8,924.7 L818.8,923.7 L822.4,922.2 L824.5,925.2 L828.2,922.1 L831.9,923.3 L835.2,924.4 L838.0,922.7 L840.5,924.1 L845.0,923.3 L849.1,923.7 L854.0,922.2 L858.1,924.1 L862.2,923.7 L865.9,921.3 L870.4,923.7 L874.5,923.9 L878.6,923.7 L881.1,921.4 L883.6,923.7 L886.4,922.9 L889.3,918.4 L891.8,917.0" fill="none" stroke="#5f93c2" stroke-width="4" stroke-linejoin="round" stroke-linecap="round"/>
<path d="M1127,760.6 H2349" stroke="#e4e7f0" stroke-width="1.7" stroke-dasharray="7.9 8.1" fill="none"/>
<path d="M1127,808.4 H2349" stroke="#e4e7f0" stroke-width="1.7" stroke-dasharray="7.9 8.1" fill="none"/>
<path d="M1127,856.2 H2349" stroke="#e4e7f0" stroke-width="1.7" stroke-dasharray="7.9 8.1" fill="none"/>
<path d="M1127,904.0 H2349" stroke="#e4e7f0" stroke-width="1.7" stroke-dasharray="7.9 8.1" fill="none"/>
<path d="M1127,951.8 H2349" stroke="#e4e7f0" stroke-width="1.7" stroke-dasharray="7.9 8.1" fill="none"/>
<path d="M1127,999.6 H2349" stroke="#e4e7f0" stroke-width="1.7" stroke-dasharray="7.9 8.1" fill="none"/>
<path d="M1127,1047.4 H2349" stroke="#e4e7f0" stroke-width="1.7" stroke-dasharray="7.9 8.1" fill="none"/>
<path d="M1127,1095.2 H2349" stroke="#e4e7f0" stroke-width="1.7" stroke-dasharray="7.9 8.1" fill="none"/>
<path d="M1126,760 V1143.8" stroke="#e3e6ef" stroke-width="1.6" fill="none"/>
<path d="M1125.2,1143.3 H2364" stroke="#dcdfe7" stroke-width="1.6" fill="none"/>
<path d="M1126.0,1144 V1166.5" stroke="#a2a7b3" stroke-width="1.5" fill="none"/>
<path d="M1285.8,1144 V1166.5" stroke="#a2a7b3" stroke-width="1.5" fill="none"/>
<path d="M1445.5,1144 V1166.5" stroke="#a2a7b3" stroke-width="1.5" fill="none"/>
<path d="M1605.2,1144 V1166.5" stroke="#a2a7b3" stroke-width="1.5" fill="none"/>
<path d="M1765.0,1144 V1166.5" stroke="#a2a7b3" stroke-width="1.5" fill="none"/>
<path d="M1924.8,1144 V1166.5" stroke="#a2a7b3" stroke-width="1.5" fill="none"/>
<path d="M2084.5,1144 V1166.5" stroke="#a2a7b3" stroke-width="1.5" fill="none"/>
<path d="M2244.2,1144 V1166.5" stroke="#a2a7b3" stroke-width="1.5" fill="none"/>
<path d="M1126,1128.2 H1803.2 C1811,1128.2 1815.6,807.2 1824.4,807.2 C1833.2,807.2 1837.6,1128.2 1845.4,1128.2 H2082 C2094,1128.2 2096,1120.3 2104.7,1120.3 C2113,1120.3 2116,1126.8 2124.5,1126.8 C2133,1126.8 2136,1123.4 2144.6,1123.4 C2153,1123.4 2158,1128 2168,1128.2 H2343.6" stroke="#54b399" stroke-width="3.8" fill="none" stroke-linejoin="round"/>
<path d="M1126,1128.7 H2343.6" stroke="#6092c0" stroke-width="1.1" fill="none" opacity=".9"/>
<path d="M1126,1129.4 H2343.6" stroke="#9170b8" stroke-width="1.6" fill="none" opacity=".85"/>
<path d="M1126,1130 H2343.6" stroke="#c26a98" stroke-width="1" fill="none" opacity=".8"/>
<path d="M1126,1131.9 H2343.6" stroke="#ca8eae" stroke-width="4.2" fill="none"/>
<circle cx="2407.9" cy="776.9" r="8" fill="#54b399"/>
<circle cx="2407.9" cy="820.8" r="8" fill="#6092c0"/>
<circle cx="2407.9" cy="865.1" r="8" fill="#d36086"/>
<circle cx="2407.9" cy="908.9" r="8" fill="#9170b8"/>
<circle cx="2407.9" cy="952.8" r="8" fill="#ca8eae"/>
<circle cx="180" cy="1518.6" r="8.1" fill="#54b399"/>
<circle cx="372.9" cy="1518.6" r="8.1" fill="#e7664c"/>
<circle cx="524.9" cy="1518.6" r="8.1" fill="#eef1f7"/>
<path d="M185.4,916.3 V954.9 H176.3 V929.3 H166.7 V922.9 Q172.6,922.6 175.3,919.9 Q177.2,918.2 177.9,916.3 Z" fill="#e7664c"/>
<g fill="none" stroke="#1a1c21" stroke-width="1.8" stroke-linecap="round" stroke-linejoin="round"><path d="M846.8,1699.3 V1716.6 M838.6,1708.6 L846.8,1716.8 L855,1708.6"/></g>
</svg>
<div class="tl">
<span class="t" style="left:126.65px;top:33.64px;font-size:24.8px;color:#000;-webkit-text-stroke:0.8px #000;">D</span>
<span class="t" style="left:216.00px;top:32.21px;font-size:25.9px;color:#006bb8;-webkit-text-stroke:0.6px #006bb8;letter-spacing:0.133px;">Observability</span>
<span class="t" style="left:423.70px;top:32.21px;font-size:25.9px;color:#006bb8;-webkit-text-stroke:0.6px #006bb8;letter-spacing:0.400px;">Synthetics</span>
<span class="t" style="left:601.40px;top:32.21px;font-size:25.9px;color:#006bb8;-webkit-text-stroke:0.6px #006bb8;letter-spacing:0.686px;">Monitors</span>
<span class="t" style="left:759.80px;top:32.21px;font-size:25.9px;color:#343741;-webkit-text-stroke:0.5px #343741;letter-spacing:0.055px;">adding and removing multiple tasks</span>
<span class="t" style="left:1935.30px;top:30.51px;font-size:30.4px;color:#343741;-webkit-text-stroke:0.6px #343741;letter-spacing:-0.027px;">Alerts and rules</span>
<span class="t" style="left:2241.70px;top:30.51px;font-size:30.4px;color:#343741;-webkit-text-stroke:0.6px #343741;letter-spacing:0.186px;">Settings</span>
<span class="t" style="left:2447.50px;top:30.51px;font-size:30.4px;color:#343741;-webkit-text-stroke:0.6px #343741;letter-spacing:-0.327px;">Explore data</span>
<span class="t" style="left:161.30px;top:152.35px;font-size:28.7px;color:#006bb8;-webkit-text-stroke:0.6px #006bb8;letter-spacing:1.200px;">Monitors</span>
<span class="t" style="left:129.49px;top:210.74px;font-size:72.5px;color:#1a1c21;font-weight:700;transform:scaleX(0.9573);transform-origin:0 0;">adding and removing</span>
<span class="t" style="left:126.40px;top:290.44px;font-size:72.5px;color:#1a1c21;font-weight:700;letter-spacing:-0.900px;">multiple tasks</span>
<span class="t" style="left:1082.01px;top:212.53px;font-size:35px;color:#1a1c21;font-weight:700;transform:scaleX(0.9451);transform-origin:0 0;">Location</span>
<span class="t" style="left:1081.90px;top:259.41px;font-size:30.4px;color:#343741;letter-spacing:-0.296px;">North America - Canada East</span>
<span class="t" style="left:1518.14px;top:212.53px;font-size:35px;color:#1a1c21;font-weight:700;transform:scaleX(0.9600);transform-origin:0 0;">Status</span>
<span class="t" style="left:1535.50px;top:262.71px;font-size:26.5px;color:#000;-webkit-text-stroke:0.7px #000;letter-spacing:-0.175px;">Succeeded</span>
<span class="t" style="left:1730.12px;top:212.53px;font-size:35px;color:#1a1c21;font-weight:700;transform:scaleX(0.9396);transform-origin:0 0;">Last run</span>
<span class="t" style="left:1731.00px;top:259.41px;font-size:30.4px;color:#343741;letter-spacing:-0.192px;">4 minutes ago</span>
<span class="t" style="left:2039.10px;top:233.23px;font-size:28.6px;color:#006d64;-webkit-text-stroke:0.7px #006d64;letter-spacing:0.519px;">Run test manually</span>
<span class="t" style="left:2421.16px;top:233.23px;font-size:28.6px;color:#fff;font-weight:700;transform:scaleX(0.9687);transform-origin:0 0;">Edit monitor</span>
<span class="t" style="left:138.35px;top:436.23px;font-size:35px;color:#1a1c21;font-weight:700;transform:scaleX(0.9503);transform-origin:0 0;">Overview</span>
<span class="t" style="left:350.78px;top:436.23px;font-size:35px;color:#006bb8;font-weight:700;transform:scaleX(0.9610);transform-origin:0 0;">History</span>
<span class="t" style="left:578.49px;top:436.23px;font-size:35px;color:#1a1c21;font-weight:700;transform:scaleX(0.9059);transform-origin:0 0;">Errors</span>
<span class="t" style="left:668.70px;top:569.61px;font-size:30.4px;color:#343741;letter-spacing:-0.155px;">~ 8 days ago</span>
<span class="t" style="left:1738.50px;top:569.61px;font-size:30.4px;color:#343741;letter-spacing:0.200px;">now</span>
<span class="t" style="left:2291.55px;top:569.31px;font-size:30.4px;color:#343741;transform:scaleX(0.9234);transform-origin:0 0;">1 m</span>
<span class="t" style="left:2461.69px;top:570.16px;font-size:29.4px;color:#fff;font-weight:700;transform:scaleX(0.9528);transform-origin:0 0;">Refresh</span>
<span class="t" style="left:163.70px;top:688.12px;font-size:35px;color:#1a1c21;font-weight:700;letter-spacing:-0.575px;">Stats</span>
<span class="t" style="left:163.10px;top:752.42px;font-size:55px;color:#343741;font-weight:700;letter-spacing:-0.725px;">2,204</span>
<span class="t" style="left:164.10px;top:818.65px;font-size:28.7px;color:#343741;letter-spacing:-0.457px;">Complete</span>
<span class="t" style="left:547.50px;top:752.23px;font-size:55px;color:#209280;font-weight:700;letter-spacing:-0.880px;">100.0%</span>
<span class="t" style="left:548.70px;top:818.75px;font-size:28.7px;color:#343741;transform:scaleX(0.9578);transform-origin:0 0;">Availability</span>
<span class="t" style="left:163.20px;top:974.55px;font-size:28.7px;color:#343741;letter-spacing:-0.120px;">Errors</span>
<span class="t" style="left:545.70px;top:907.73px;font-size:55px;color:#343741;font-weight:700;letter-spacing:0.075px;">1.3 s</span>
<span class="t" style="left:548.70px;top:974.55px;font-size:28.7px;color:#343741;transform:scaleX(0.9677);transform-origin:0 0;">Avg. duration</span>
<span class="t" style="left:163.20px;top:1047.43px;font-size:55px;color:#343741;font-weight:700;letter-spacing:-0.500px;">2,205</span>
<span class="t" style="left:163.60px;top:1113.55px;font-size:28.7px;color:#343741;letter-spacing:-0.311px;">Total runs</span>
<span class="t" style="left:1004.61px;top:688.62px;font-size:35px;color:#1a1c21;font-weight:700;transform:scaleX(0.9463);transform-origin:0 0;">Duration trends</span>
<span class="t" style="left:1049.50px;top:750.42px;font-size:20.8px;color:#69707d;">40.0 s</span>
<span class="t" style="left:1049.50px;top:798.22px;font-size:20.8px;color:#69707d;">35.0 s</span>
<span class="t" style="left:1049.50px;top:846.02px;font-size:20.8px;color:#69707d;">30.0 s</span>
<span class="t" style="left:1049.50px;top:893.82px;font-size:20.8px;color:#69707d;">25.0 s</span>
<span class="t" style="left:1049.50px;top:941.62px;font-size:20.8px;color:#69707d;">20.0 s</span>
<span class="t" style="left:1049.50px;top:989.42px;font-size:20.8px;color:#69707d;">15.0 s</span>
<span class="t" style="left:1049.50px;top:1037.22px;font-size:20.8px;color:#69707d;">10.0 s</span>
<span class="t" style="left:1060.50px;top:1085.02px;font-size:20.8px;color:#69707d;">5.0 s</span>
<span class="t" style="left:1043.50px;top:1132.82px;font-size:20.8px;color:#69707d;">0.0 ms</span>
<span class="t" style="left:1130.80px;top:1149.82px;font-size:20.8px;color:#69707d;">17th</span>
<span class="t" style="left:1290.55px;top:1149.82px;font-size:20.8px;color:#69707d;">18th</span>
<span class="t" style="left:1450.30px;top:1149.82px;font-size:20.8px;color:#69707d;">19th</span>
<span class="t" style="left:1610.05px;top:1149.82px;font-size:20.8px;color:#69707d;">20th</span>
<span class="t" style="left:1769.80px;top:1149.82px;font-size:20.8px;color:#69707d;">21st</span>
<span class="t" style="left:1929.55px;top:1149.82px;font-size:20.8px;color:#69707d;">22nd</span>
<span class="t" style="left:2089.30px;top:1149.82px;font-size:20.8px;color:#69707d;">23rd</span>
<span class="t" style="left:2249.05px;top:1149.82px;font-size:20.8px;color:#69707d;">24th</span>
<span class="t" style="left:1129.60px;top:1170.42px;font-size:20.8px;color:#69707d;letter-spacing:0.317px;">February 2023</span>
<span class="t" style="left:2432.20px;top:761.61px;font-size:25.2px;color:#343741;-webkit-text-stroke:0.3px #343741;">Max</span>
<span class="t" style="left:2433.20px;top:805.51px;font-size:25.2px;color:#343741;-webkit-text-stroke:0.3px #343741;">75th</span>
<span class="t" style="left:2432.20px;top:849.81px;font-size:25.2px;color:#343741;-webkit-text-stroke:0.3px #343741;">Median</span>
<span class="t" style="left:2433.20px;top:893.61px;font-size:25.2px;color:#343741;-webkit-text-stroke:0.3px #343741;">25th</span>
<span class="t" style="left:2432.20px;top:937.51px;font-size:25.2px;color:#343741;-webkit-text-stroke:0.3px #343741;">Min</span>
<span class="t" style="left:163.64px;top:1308.83px;font-size:35px;color:#1a1c21;font-weight:700;transform:scaleX(0.9619);transform-origin:0 0;">Status</span>
<span class="t" style="left:163.80px;top:1451.76px;font-size:20.4px;color:#69707d;">01:04</span>
<span class="t" style="left:299.60px;top:1451.76px;font-size:20.4px;color:#69707d;">11:32</span>
<span class="t" style="left:435.40px;top:1451.76px;font-size:20.4px;color:#69707d;">22:00</span>
<span class="t" style="left:571.20px;top:1451.76px;font-size:20.4px;color:#69707d;">08:28</span>
<span class="t" style="left:707.00px;top:1451.76px;font-size:20.4px;color:#69707d;">18:56</span>
<span class="t" style="left:842.80px;top:1451.76px;font-size:20.4px;color:#69707d;">05:24</span>
<span class="t" style="left:978.60px;top:1451.76px;font-size:20.4px;color:#69707d;">15:52</span>
<span class="t" style="left:1114.40px;top:1451.76px;font-size:20.4px;color:#69707d;">02:20</span>
<span class="t" style="left:1250.20px;top:1451.76px;font-size:20.4px;color:#69707d;">12:48</span>
<span class="t" style="left:1386.00px;top:1451.76px;font-size:20.4px;color:#69707d;">23:16</span>
<span class="t" style="left:1521.80px;top:1451.76px;font-size:20.4px;color:#69707d;">09:44</span>
<span class="t" style="left:1657.60px;top:1451.76px;font-size:20.4px;color:#69707d;">20:12</span>
<span class="t" style="left:1793.40px;top:1451.76px;font-size:20.4px;color:#69707d;">06:40</span>
<span class="t" style="left:1929.20px;top:1451.76px;font-size:20.4px;color:#69707d;">17:08</span>
<span class="t" style="left:2065.00px;top:1451.76px;font-size:20.4px;color:#69707d;">03:36</span>
<span class="t" style="left:2200.80px;top:1451.76px;font-size:20.4px;color:#69707d;">14:04</span>
<span class="t" style="left:2336.60px;top:1451.76px;font-size:20.4px;color:#69707d;">2/24/2023</span>
<span class="t" style="left:2472.40px;top:1451.76px;font-size:20.4px;color:#69707d;">11:00</span>
<span class="t" style="left:199.90px;top:1506.25px;font-size:25.5px;color:#343741;letter-spacing:0.071px;">Complete</span>
<span class="t" style="left:392.50px;top:1506.25px;font-size:25.5px;color:#343741;letter-spacing:-0.080px;">Failed</span>
<span class="t" style="left:545.20px;top:1506.25px;font-size:25.5px;color:#343741;letter-spacing:-0.017px;">Skipped</span>
<span class="t" style="left:2217.00px;top:1506.25px;font-size:25.5px;color:#69707d;letter-spacing:0.056px;">Brush an area for higher fidelity</span>
<span class="t" style="left:165.30px;top:1632.83px;font-size:35px;color:#1a1c21;font-weight:700;transform:scaleX(0.9236);transform-origin:0 0;">Test Runs</span>
<span class="t" style="left:179.98px;top:1693.51px;font-size:26.5px;color:#1a1c21;font-weight:700;transform:scaleX(0.9203);transform-origin:0 0;">Screenshot</span>
<span class="t" style="left:676.07px;top:1693.51px;font-size:26.5px;color:#1a1c21;font-weight:700;transform:scaleX(0.9299);transform-origin:0 0;">@timestamp</span>
<span class="t" style="left:1629.87px;top:1693.51px;font-size:26.5px;color:#1a1c21;font-weight:700;transform:scaleX(0.9139);transform-origin:0 0;">Result</span>
<span class="t" style="left:2012.47px;top:1693.51px;font-size:26.5px;color:#1a1c21;font-weight:700;transform:scaleX(0.9670);transform-origin:0 0;">Message</span>
<span class="t" style="left:2456.84px;top:1693.51px;font-size:26.5px;color:#1a1c21;font-weight:700;transform:scaleX(0.9292);transform-origin:0 0;">Duration</span>
<span class="t" style="left:675.00px;top:1812.31px;font-size:30.4px;color:#006bb8;-webkit-text-stroke:0.35px #006bb8;letter-spacing:0.465px;">Feb 24, 2023 @ 15:42:05.043</span>
<span class="t" style="left:1648.90px;top:1814.41px;font-size:26.5px;color:#000;-webkit-text-stroke:0.7px #000;letter-spacing:-0.229px;">Complete</span>
<span class="t" style="left:2016.00px;top:1812.31px;font-size:30.4px;color:#343741;">-</span>
<span class="t" style="left:2491.80px;top:1812.31px;font-size:30.4px;color:#343741;letter-spacing:0.100px;">1.4 s</span>
<span class="t" style="left:675.00px;top:1988.26px;font-size:30.4px;color:#006bb8;-webkit-text-stroke:0.35px #006bb8;letter-spacing:0.427px;">Feb 24, 2023 @ 15:37:04.954</span>
<span class="t" style="left:1648.90px;top:1990.36px;font-size:26.5px;color:#000;-webkit-text-stroke:0.7px #000;letter-spacing:-0.229px;">Complete</span>
<span class="t" style="left:2016.00px;top:1988.26px;font-size:30.4px;color:#343741;">-</span>
<span class="t" style="left:2491.80px;top:1988.26px;font-size:30.4px;color:#343741;letter-spacing:0.100px;">1.3 s</span>
<span class="t" style="left:675.00px;top:2164.21px;font-size:30.4px;color:#006bb8;-webkit-text-stroke:0.35px #006bb8;letter-spacing:0.465px;">Feb 24, 2023 @ 15:32:05.200</span>
<span class="t" style="left:1648.90px;top:2166.31px;font-size:26.5px;color:#000;-webkit-text-stroke:0.7px #000;letter-spacing:-0.229px;">Complete</span>
<span class="t" style="left:2016.00px;top:2164.21px;font-size:30.4px;color:#343741;">-</span>
<span class="t" style="left:2491.80px;top:2164.21px;font-size:30.4px;color:#343741;letter-spacing:0.100px;">1.4 s</span>
</div>
</div>
</body></html>
